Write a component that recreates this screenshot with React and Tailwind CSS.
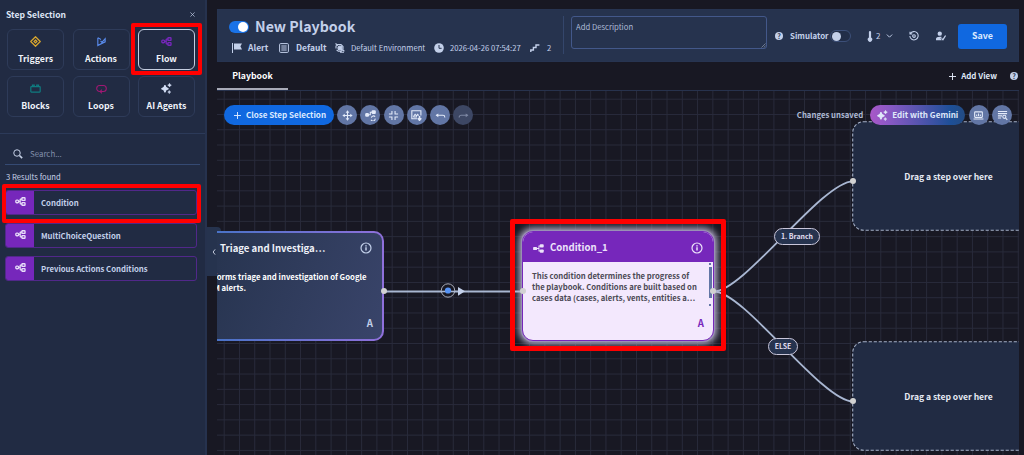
import clsx from 'clsx';

const BranchIcon = ({ className }) => (
    <svg viewBox="0 0 12 10" className={className} fill="none" stroke="currentColor" strokeWidth="1.5">
        <rect x="0.8" y="3.4" width="3" height="3" rx="1" />
        <rect x="7.6" y="0.8" width="3.4" height="3" rx="0.6" />
        <rect x="7.6" y="6.2" width="3.4" height="3" rx="0.6" />
        <path d="M3.8 4.9h1.8M7.6 2.2H6.6a1 1 0 0 0-1 1v3.6a1 1 0 0 0 1 1h1" />
    </svg>
);

const SparkIcon = ({ className }) => (
    <svg viewBox="0 0 12 12" className={className} fill="currentColor">
        <path d="M4.3 2.2Q4.9 5.7 8.2 6.3Q4.9 6.9 4.3 10.4Q3.7 6.9 .4 6.3Q3.7 5.7 4.3 2.2Z" stroke="currentColor" strokeWidth="1.1" />
        <path d="M9.3.4Q9.6 2 11.3 2.4Q9.6 2.8 9.3 4.4Q9 2.8 7.3 2.4Q9 2 9.3.4ZM9 8.2Q9.2 9.6 10.6 9.9Q9.2 10.2 9 11.6Q8.8 10.2 7.4 9.9Q8.8 9.6 9 8.2Z" stroke="currentColor" strokeWidth=".6" />
    </svg>
);

const HelpIcon = ({ className }) => (
    <span className={clsx('flex h-2 w-2 shrink-0 items-center justify-center rounded-full bg-[#c3d0ea] text-[7px] leading-none font-bold text-[#25324e]', className)}>?</span>
);

const InfoIcon = ({ className }) => (
    <svg viewBox="0 0 12 12" className={className} fill="none" stroke="currentColor" strokeWidth="1.2">
        <circle cx="6" cy="6" r="5" />
        <path d="M6 5.2v3.4M6 3.2v1.2" strokeWidth="1.5" />
    </svg>
);

const stepTypes = [
    {
        label: 'Triggers',
        color: 'text-[#d9a62e]',
        icon: (
            <svg viewBox="0 0 12 12" className="h-[11px] w-[11px]" fill="none" stroke="currentColor" strokeWidth="1.3">
                <path d="M6 .8 11.2 6 6 11.2.8 6Z" strokeLinejoin="round" />
                <path d="M6 4.4 7.6 6 6 7.6 4.4 6Z" />
            </svg>
        )
    },
    {
        label: 'Actions',
        color: 'text-[#5a8df0]',
        icon: (
            <svg viewBox="0 0 12 12" className="h-[11px] w-[11px]" fill="none" stroke="currentColor" strokeWidth="1.2">
                <path d="M2 1.8v8.6l3-1.6M2 1.8l3.4 2M2 10.4 10 6.4V3L6.4 7 5 5.4" />
            </svg>
        )
    },
    { label: 'Flow', color: 'text-[#7627bb]', active: true, icon: <BranchIcon className="h-[9px] w-[11px]" /> },
    {
        label: 'Blocks',
        color: 'text-[#0f7c80]',
        icon: (
            <svg viewBox="0 0 12 10" className="h-[9px] w-[11px]" fill="none" stroke="currentColor" strokeWidth="1.3">
                <rect x=".8" y="3" width="10.4" height="6" rx=".6" />
                <path d="M2.6 3V1.2h2V3M7.4 3V1.2h2V3" />
            </svg>
        )
    },
    {
        label: 'Loops',
        color: 'text-[#a01873]',
        icon: (
            <svg viewBox="0 0 12 11" className="h-[10px] w-[11px]" fill="none" stroke="currentColor" strokeWidth="1.2">
                <path d="M4.6 8.2H4a3.2 3.2 0 0 1 0-6.6h4a3.2 3.2 0 0 1 0 6.6H5M6.4 6.2 4.6 8.2l1.8 2" />
            </svg>
        )
    },
    { label: 'AI Agents', color: 'text-[#d3def5]', icon: <SparkIcon className="h-[11px] w-[11px]" /> }
];

const results = ['Condition', 'MultiChoiceQuestion', 'Previous Actions Conditions'];

const Sidebar = () => (
    <aside className="h-[455px] w-[207px] shrink-0 border-r-2 border-[#26324e] bg-[#212b43]">
        <div className="flex h-[29px] items-center justify-between pr-[10px] pl-[6px]">
            <h2 className="text-[8.5px] font-bold">Step Selection</h2>
            <svg viewBox="0 0 6 6" className="h-[5px] w-[5px]" stroke="#b9c4dc" strokeWidth=".9">
                <path d="M.5.5l5 5M5.5.5l-5 5" />
            </svg>
        </div>

        <div className="grid grid-cols-[57px_57px_57px] gap-x-[8.5px] gap-y-[6px] pl-[7px]">
            {stepTypes.map((type) => (
                <div
                    key={type.label}
                    className={clsx(
                        'flex h-[41px] flex-col items-center rounded-md border pt-[6px]',
                        type.active ? 'border-[#c5cee0]' : 'border-[#2e3b59]'
                    )}
                >
                    <span className={clsx('flex h-[11px] items-center', type.color)}>{type.icon}</span>
                    <span className="mt-[5px] text-[8.75px] leading-[13px] font-bold whitespace-nowrap text-[#f0f3fa]">{type.label}</span>
                </div>
            ))}
        </div>

        <div className="mt-4 border-t border-[#2c3a59]" />

        <div className="mx-[5px] mt-[9px] flex h-[22px] items-center border-b border-[#354a73] pl-2">
            <svg viewBox="0 0 12 12" className="h-[10px] w-[10px]" fill="none" stroke="#c5d0e6" strokeWidth="1.2">
                <circle cx="4.8" cy="4.8" r="3.9" />
                <path d="M7.8 7.8 11 11" strokeWidth="2" />
            </svg>
            <span className="ml-[7px] text-[7.9px] text-[#8390ac]">Search...</span>
        </div>

        <p className="mt-[6px] pl-[6px] text-[7.7px] leading-[12px] text-[#c7d2e8]">3 Results found</p>

        <div className="mt-[7px] flex flex-col gap-2 pr-2 pl-[5px]">
            {results.map((name) => (
                <div key={name} className="flex h-[25px] overflow-hidden rounded-[3px] border border-[#51288a]">
                    <span className="flex w-[28px] items-center justify-center bg-[#7627bb] text-[#e6dcf8]">
                        <BranchIcon className="mb-[3px] h-[9px] w-[11px]" />
                    </span>
                    <span className="flex items-center pl-[7px] text-[7.75px] font-bold text-[#c3d0ea]">{name}</span>
                </div>
            ))}
        </div>
    </aside>
);

const Header = () => (
    <header className="flex h-[53px] border border-[#273451] bg-[#26334e]">
        <div className="flex w-[345px] flex-col pl-[11px]">
            <div className="mt-[6px] flex h-[21px] items-center">
                <span className="flex h-[12px] w-[20px] items-center justify-end rounded-full bg-[#1a73e8] pr-[1px]">
                    <span className="h-[10px] w-[10px] rounded-full bg-white" />
                </span>
                <h1 className="ml-[6px] text-[14.2px] leading-[21px] font-bold text-[#c3d0ea]">New Playbook</h1>
            </div>
            <div className="flex h-[21px] items-center text-[#c3d0ea]">
                <svg viewBox="0 0 10 10" className="ml-[3px] h-[10px] w-[10px]" fill="currentColor">
                    <path d="M0 0h1v10H0zM2 .5h8L8.4 3.3 10 6.5H2z" />
                </svg>
                <span className="ml-[6px] w-[30px] text-[8.5px] font-bold">Alert</span>
                <svg viewBox="0 0 10 10" className="ml-[1px] h-[10px] w-[10px]" fill="none" stroke="currentColor">
                    <rect x=".6" y=".6" width="8.8" height="8.8" rx="1" />
                    <path d="M2.3 3h5.4M2.3 5h5.4M2.3 7h5.4" />
                </svg>
                <span className="ml-[7px] w-[39px] text-[8.5px] font-bold">Default</span>
                <svg viewBox="0 0 10 10" className="h-[10px] w-[10px]" fill="none" stroke="currentColor" strokeWidth="1.1">
                    <path d="M.5.5 3 2.5M1 5.5V3l2-1.5h3l2 2v3L6.2 8.2H3.3L1.6 7M7.8 7l1.6 1.2M5 9.3h4" />
                    <circle cx="5" cy="5" r="2" fill="currentColor" />
                </svg>
                <span className="ml-[6px] w-[83px] text-[7.7px] whitespace-nowrap">Default Environment</span>
                <svg viewBox="0 0 10 10" className="h-[10px] w-[10px]">
                    <circle cx="5" cy="5" r="4.8" fill="currentColor" />
                    <path d="M5 2v3.3h2.6" fill="none" stroke="#26334e" />
                </svg>
                <span className="ml-[6px] w-[80px] text-[7.65px] whitespace-nowrap">2026-04-26 07:54:27</span>
                <svg viewBox="0 0 10 10" className="h-[10px] w-[10px]" fill="none" stroke="currentColor" strokeWidth="1.4">
                    <path d="M.8 9V7h2.6V4.5H6V2h3.4" />
                </svg>
                <span className="ml-[7px] text-[7.7px]">2</span>
            </div>
        </div>

        <div className="mt-[6px] h-[38px] w-px bg-[#34466b]" />
        <div className="relative mt-[6px] ml-[7px] h-[33px] w-[196px] rounded-[3px] border border-[#43588a] px-[4px] pt-[4px] text-[7.7px] leading-[12px] text-[#aebbd6]">
            Add Description
            <svg viewBox="0 0 5 5" className="absolute right-0 bottom-0 h-[5px] w-[5px]" stroke="#8d98ad" strokeWidth=".7">
                <path d="M.5 4.5l4-4M2.7 4.6l1.8-1.8" />
            </svg>
        </div>

        <div className="flex h-[52px] items-center text-[#c3d0ea]">
            <HelpIcon className="ml-[8px]" />
            <span className="ml-[7px] w-[40px] text-[7.9px] font-bold">Simulator</span>
            <span className="flex h-[12px] w-[21px] items-center rounded-full border border-[#3c4f78] bg-[#222e48] pl-px">
                <span className="h-[9px] w-[9px] rounded-full bg-[#c3d0ea]" />
            </span>
            <svg viewBox="0 0 6 12" className="ml-[16px] h-[11px] w-[6px]" fill="currentColor">
                <path d="M1.8 1.2a1.2 1.2 0 0 1 2.4 0v6a2.4 2.4 0 1 1-2.4 0z" />
            </svg>
            <span className="ml-[3px] w-[5px] text-[8px]">2</span>
            <svg viewBox="0 0 8 5" className="ml-[5px] h-[4px] w-[7px]" fill="none" stroke="currentColor" strokeWidth="1.2">
                <path d="M.7.7 4 4 7.3.7" />
            </svg>
            <svg viewBox="0 0 12 12" className="ml-[16px] h-[10px] w-[10px]" fill="none" stroke="currentColor" strokeWidth="1.3">
                <path d="M1.6 3.3A5 5 0 1 1 1 6M1.2.8v2.8H4" />
                <circle cx="6" cy="6" r="1.6" />
            </svg>
            <svg viewBox="0 0 12 12" className="ml-[17px] h-[10px] w-[10px]" fill="currentColor">
                <circle cx="4.5" cy="3.2" r="2.6" />
                <path d="M0 11V9.3C0 7.6 2 6.8 4.5 6.8c1 0 1.9.1 2.6.4L5.4 9l1.6 2z" />
                <path d="M6.6 8.8 8.3 10.4 11.5 5.5" fill="none" stroke="currentColor" strokeWidth="1.5" />
            </svg>
            <button className="ml-[12px] h-[25px] w-[49px] rounded-[3px] bg-[#1068e0] text-[8.9px] font-bold text-[#dbe8ff]">Save</button>
        </div>
    </header>
);

const Tabs = () => (
    <div className="flex h-[29px] items-stretch justify-between border-b border-[#27324d]">
        <div className="flex w-[71px] items-center justify-center border-b-2 border-[#a9abb8] pt-[3px] text-[8.7px] font-bold text-white">Playbook</div>
        <div className="flex items-center pr-[1px] text-[7.95px] font-bold">
            <svg viewBox="0 0 8 8" className="mr-[5px] h-[7px] w-[7px]" stroke="currentColor" strokeWidth="1.1">
                <path d="M4 0v8M0 4h8" />
            </svg>
            Add View
            <HelpIcon className="ml-[13px]" />
        </div>
    </div>
);

const RoundButton = ({ children, dim }) => (
    <button className={clsx('flex h-[20px] w-[20px] items-center justify-center rounded-full', dim ? 'bg-[#3d4764] text-[#7c86a2]' : 'bg-[#6276a5] text-[#e3eaf9]')}>
        <svg viewBox="0 0 12 12" className="h-[11px] w-[11px]" fill="none" stroke="currentColor" strokeWidth="1.2">
            {children}
        </svg>
    </button>
);

const Toolbar = () => (
    <div className="relative z-10 flex h-[20px] items-center pr-[7px] pl-[7px]">
        <button className="mr-[3px] flex h-[20px] w-[110px] items-center rounded-full bg-[#1068e0] pl-[10px] text-[8.05px] font-bold whitespace-nowrap text-[#dbe8ff]">
            <svg viewBox="0 0 8 8" className="mr-[5px] h-[7px] w-[7px]" stroke="currentColor" strokeWidth="1.1">
                <path d="M4 0v8M0 4h8" />
            </svg>
            Close Step Selection
        </button>
        <div className="flex gap-[3.3px]">
            <RoundButton>
                <path d="M6 2v8M2 6h8" />
                <path d="M6 .4 8 3H4zM6 11.6 8 9H4zM.4 6l2.6-2v4zM11.6 6 9 4v4z" fill="currentColor" stroke="none" />
            </RoundButton>
            <RoundButton>
                <rect x=".2" y="3.4" width="4.2" height="4" rx="1.4" fill="currentColor" stroke="none" />
                <rect x="7.2" y=".4" width="4.6" height="4" rx="1.2" fill="currentColor" stroke="none" />
                <path d="M4 5.2h1.8V2.4h2M11 7.4A2.3 2.3 0 0 0 6.9 8.2M6.6 10.6A2.3 2.3 0 0 0 11 9.4" />
            </RoundButton>
            <RoundButton>
                <path d="M4.3 1v3.3H1M7.7 1v3.3H11M4.3 11V7.7H1M7.7 11V7.7H11" />
            </RoundButton>
            <RoundButton>
                <path d="M10.8 6V.8H.9v8.7h5.6M2.5 7.4l2-2.6 1.5 1.6L7.3 4.8l1 1.4M2.5 7.6h4" />
                <path d="M9.3 6.5v4M7.4 9l1.9 2.2L11.2 9" strokeWidth="1.7" />
            </RoundButton>
            <RoundButton>
                <path d="M1.5 5.8h7.2a2 2 0 0 1 2 2v.5" />
                <path d="M0.6 5.8 3.6 3.8v4z" fill="currentColor" stroke="none" />
            </RoundButton>
            <RoundButton dim>
                <path d="M10.5 5.8H3.3a2 2 0 0 0-2 2v.5" />
                <path d="M11.4 5.8 8.4 3.8v4z" fill="currentColor" stroke="none" />
            </RoundButton>
        </div>

        <span className="ml-auto text-[7.75px] font-bold text-[#aebad3]">Changes unsaved</span>
        <button className="ml-[7px] flex h-[20px] w-[95px] items-center rounded-full bg-[linear-gradient(90deg,#a957c8_0%,#8a59c4_20%,#1d4f97_85%,#234b83_100%)] pl-[7px] text-[8.1px] font-bold whitespace-nowrap text-[#dfe8fa]">
            <SparkIcon className="mr-[4px] h-[11px] w-[11px]" />
            Edit with Gemini
        </button>
        <div className="ml-[3.5px] flex gap-[3.3px]">
            <RoundButton>
                <rect x="1.8" y="2" width="8.4" height="6" rx=".6" />
                <path d="M.6 9.8h10.8M4 6.5V5M6 6.5V3.8M8 6.5V5" />
            </RoundButton>
            <RoundButton>
                <path d="M1 1.6h10M1 4h10M1 6.4h4.5M1 8.8h3.5" />
                <circle cx="8" cy="7.4" r="1.7" />
                <path d="M9.3 8.7 11.2 10.8" />
            </RoundButton>
        </div>
    </div>
);

// Canvas coordinates start at the top left corner of the grid area
const GRID = 15.27;
const verticals = Array.from({ length: 53 }, (_, i) => 7.2 + i * GRID);
const horizontals = Array.from({ length: 24 }, (_, i) => 8.2 + i * GRID);

const Wires = () => (
    <svg className="absolute inset-0 h-[364px] w-[802px]" viewBox="0 0 802 364" fill="none">
        <g stroke="#292b3b" strokeWidth="1">
            {verticals.map((x) => <path key={x} d={`M${x} 0V364`} />)}
            {horizontals.map((y) => <path key={y} d={`M0 ${y}H802`} />)}
        </g>
        <g stroke="#a9b7d2" strokeWidth="1.8">
            <path d="M167 200.5H306" />
            <path d="M497 200.5C527 200.5 605 90.3 636 90.3" />
            <path d="M497 200.5C527 200.5 605 310.5 636 310.5" />
        </g>
        <circle cx="231" cy="199.5" r="6.7" fill="#181823" stroke="#b9bcc8" strokeWidth=".9" />
        <path d="M224 200.5h14" stroke="#a9b7d2" strokeWidth="1.6" />
        <circle cx="231" cy="199.5" r="3.1" fill="#5693f5" />
        <path d="M241 196 248 200.3 241 204.8Z" fill="#c3d0ea" />
    </svg>
);

const Port = ({ className }) => <span className={clsx('absolute h-[6px] w-[6px] rounded-full bg-[#d2d2d2]', className)} />;

const DropZone = ({ className }) => (
    <div className={clsx('absolute left-[635px] flex h-[110px] w-[193px] items-center justify-center text-[8.55px] font-bold text-[#e6eaf3]', className)}>
        <svg viewBox="0 0 193 110" className="absolute inset-0 h-full w-full">
            <rect x=".7" y=".7" width="191.6" height="108.6" rx="11" fill="#212b43" stroke="#a4afc6" strokeWidth="1.1" strokeDasharray="3.2 1.8" />
        </svg>
        <span className="relative mt-px">Drag a step over here</span>
    </div>
);

const Canvas = () => (
    <main className="relative h-[364px] overflow-hidden pt-[14px]">
        <Wires />

        <div className="absolute top-[140px] -left-[25px] h-[110px] w-[192px] rounded-[10px] bg-[linear-gradient(90deg,#3f73c4,#8f70db)] p-[2px]">
            <div className="h-full rounded-[8px] bg-[linear-gradient(110deg,#27344f_10%,#39446a)] pt-[8px] pr-[10px] pl-[26px]">
                <div className="flex items-center justify-between">
                    <h3 className="text-[9.6px] leading-[14px] font-bold whitespace-nowrap text-[#eef1f8]">Triage and Investiga…</h3>
                    <InfoIcon className="h-[12px] w-[12px] text-[#c3d0ea]" />
                </div>
                <p className="-ml-[19px] mt-[16px] text-[7.75px] leading-[11px] font-bold whitespace-nowrap text-white">
                    Performs triage and investigation of Google<br />SIEM alerts.
                </p>
                <p className="mt-[24px] -mr-[1px] text-right text-[9.6px] leading-[12px] font-bold text-[#c3d0ea]">A</p>
            </div>
        </div>

        <div className="absolute top-[140px] left-[305px] h-[110px] w-[192px] overflow-hidden rounded-[11px] border-[1.5px] border-[#7627bb] bg-[#f3e8fd] shadow-[0_0_0_1px_#9a8fb5,0_0_7px_3px_#b9b3cf]">
            <div className="flex h-[30px] items-center bg-[#7627bb] px-[10px] pt-[2px] text-[#ece2fa]">
                <svg viewBox="0 0 12 10" className="h-[9px] w-[11px]" fill="currentColor">
                    <rect y="3.2" width="4.4" height="3.6" rx="1" />
                    <rect x="7.4" y=".2" width="4.4" height="3.6" rx="1" />
                    <rect x="7.4" y="6" width="4.4" height="3.6" rx="1" />
                    <path d="M4 4.5h2V1.7h1.8v1H7v4.6h.8v1H6V5.5H4z" />
                </svg>
                <h3 className="ml-[6px] text-[9.6px] font-bold">Condition_1</h3>
                <InfoIcon className="ml-auto h-[12px] w-[12px]" />
            </div>
            <div className="flex h-[49px] justify-between pt-[8px] pl-[9px]">
                <p className="text-[7.7px] leading-[11.2px] font-bold whitespace-nowrap text-[#4c4a55]">
                    This condition determines the progress of<br />
                    the playbook. Conditions are built based on<br />
                    cases data (cases, alerts, vents, entities a…
                </p>
                <div className="-mt-[7px] mr-[1px] flex w-[4px] flex-col items-center">
                    <span className="h-[2px] w-[2px] bg-[#6276a5]" />
                    <span className="my-[2px] h-[31px] w-[3px] bg-[#6276a5]" />
                    <span className="mt-[4px] h-[2px] w-[2px] bg-[#6276a5]" />
                </div>
            </div>
            <p className="mt-[6px] pr-[9px] text-right text-[9.6px] leading-[12px] font-bold text-[#7627bb]">A</p>
        </div>

        <DropZone className="top-[30px]" />
        <DropZone className="top-[250px]" />

        <Port className="top-[197px] left-[164px]" />
        <Port className="top-[197px] left-[303px]" />
        <Port className="top-[197px] left-[493px]" />
        <Port className="top-[87px] left-[633px]" />
        <Port className="top-[307px] left-[633px]" />

        <span className="absolute top-[137px] left-[557px] flex h-[17px] w-[46px] items-center justify-center rounded-full border border-[#c9c6da] bg-[#26334e] text-[6.95px] font-bold text-[#e2def2]">1. Branch</span>
        <span className="absolute top-[247px] left-[551px] flex h-[17px] w-[30px] items-center justify-center rounded-full border border-[#c9c6da] bg-[#26334e] text-[6.95px] font-bold text-[#e2def2]">ELSE</span>

        <Toolbar />
    </main>
);

const App = () => (
    <div className="relative flex h-[455px] w-[1024px] overflow-hidden bg-[#181823] font-['Noto_Sans_CJK_SC','Noto_Sans',sans-serif] leading-none text-[#dfe6f5]">
        <Sidebar />
        <div className="absolute top-[227px] left-[207px] flex h-[49px] w-[14px] items-center rounded-tr-[4px] bg-[#26334e] pl-[5px]">
            <svg viewBox="0 0 4 8" className="h-[6px] w-[4px]" fill="none" stroke="#dfe6f5" strokeWidth="1.1">
                <path d="M3.5.5.8 4l2.7 3.5" />
            </svg>
        </div>
        <div className="relative ml-[10px] w-[802px] pt-[9px]">
            <Header />
            <Tabs />
            <Canvas />
        </div>

        {/* Highlights */}
        <div className="absolute top-[23px] left-[131px] h-[52px] w-[71px] rounded-[2px] border-4 border-[#ff0000]" />
        <div className="absolute top-[184px] left-[2px] h-[39px] w-[199px] rounded-[2px] border-4 border-[#ff0000]" />
        <div className="absolute top-[219px] left-[510px] h-[132px] w-[216px] rounded-[2px] border-[5px] border-[#ff0000]" />
    </div>
);

export default App;
